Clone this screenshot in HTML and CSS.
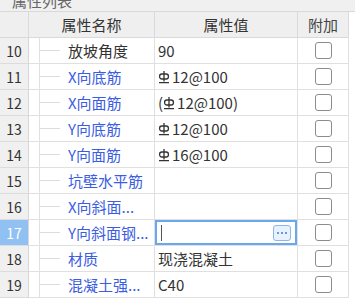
FILE: index.html
```html
<!DOCTYPE html>
<html lang="zh-CN">
<head>
    <meta charset="UTF-8">
    <title>属性列表</title>
    <link rel="stylesheet" href="styles.css">
</head>
<body>
    <div class="panel">
        <div class="caption"><span>属性列表</span></div>

        <div class="row head">
            <div class="cell num"></div>
            <div class="cell hname">属性名称</div>
            <div class="cell val center">属性值</div>
            <div class="cell add">附加</div>
        </div>

        <div class="row">
            <div class="cell num">10</div><div class="cell tree"></div>
            <div class="cell name plain"><i class="twig"></i>放坡角度</div>
            <div class="cell val">90</div>
            <div class="cell add"><span class="box"></span></div>
        </div>
        <div class="row">
            <div class="cell num">11</div><div class="cell tree"></div>
            <div class="cell name"><i class="twig"></i>X向底筋</div>
            <div class="cell val"><svg class="bar" viewBox="0 0 12 14"><path d="M6 1v10.5M1 12.6h10"/><rect x="1.6" y="4" width="8.8" height="5" rx="2.2"/></svg>12@100</div>
            <div class="cell add"><span class="box"></span></div>
        </div>
        <div class="row">
            <div class="cell num">12</div><div class="cell tree"></div>
            <div class="cell name"><i class="twig"></i>X向面筋</div>
            <div class="cell val">(<svg class="bar" viewBox="0 0 12 14"><path d="M6 1v10.5M1 12.6h10"/><rect x="1.6" y="4" width="8.8" height="5" rx="2.2"/></svg>12@100)</div>
            <div class="cell add"><span class="box"></span></div>
        </div>
        <div class="row">
            <div class="cell num">13</div><div class="cell tree"></div>
            <div class="cell name"><i class="twig"></i>Y向底筋</div>
            <div class="cell val"><svg class="bar" viewBox="0 0 12 14"><path d="M6 1v10.5M1 12.6h10"/><rect x="1.6" y="4" width="8.8" height="5" rx="2.2"/></svg>12@100</div>
            <div class="cell add"><span class="box"></span></div>
        </div>
        <div class="row">
            <div class="cell num">14</div><div class="cell tree"></div>
            <div class="cell name"><i class="twig"></i>Y向面筋</div>
            <div class="cell val"><svg class="bar" viewBox="0 0 12 14"><path d="M6 1v10.5M1 12.6h10"/><rect x="1.6" y="4" width="8.8" height="5" rx="2.2"/></svg>16@100</div>
            <div class="cell add"><span class="box"></span></div>
        </div>
        <div class="row">
            <div class="cell num">15</div><div class="cell tree"></div>
            <div class="cell name"><i class="twig"></i>坑壁水平筋</div>
            <div class="cell val"></div>
            <div class="cell add"><span class="box"></span></div>
        </div>
        <div class="row">
            <div class="cell num">16</div><div class="cell tree"></div>
            <div class="cell name"><i class="twig"></i>X向斜面...</div>
            <div class="cell val"></div>
            <div class="cell add"><span class="box"></span></div>
        </div>
        <div class="row">
            <div class="cell num current">17</div><div class="cell tree"></div>
            <div class="cell name"><i class="twig"></i>Y向斜面钢...</div>
            <div class="cell val editing">
                <span class="caret"></span>
                <span class="more"><b></b><b></b><b></b></span>
            </div>
            <div class="cell add"><span class="box"></span></div>
        </div>
        <div class="row">
            <div class="cell num">18</div><div class="cell tree"></div>
            <div class="cell name"><i class="twig"></i>材质</div>
            <div class="cell val">现浇混凝土</div>
            <div class="cell add"><span class="box"></span></div>
        </div>
        <div class="row">
            <div class="cell num">19</div><div class="cell tree"></div>
            <div class="cell name"><i class="twig"></i>混凝土强...</div>
            <div class="cell val">C40</div>
            <div class="cell add"><span class="box"></span></div>
        </div>
    </div>
</body>
</html>
```

FILE: styles.css
```css
body { margin: 0; background: #fff; font-family: "Noto Sans CJK SC", "Noto Sans", sans-serif; font-size: 15px; color: #333; }
.panel { width: 355px; height: 300px; overflow: hidden; }

.caption { height: 12px; box-sizing: border-box; overflow: hidden; background: #f0f0f0; border-bottom: 1px solid #d9d9d9; padding-left: 12px; color: #666; }
.caption span { display: block; line-height: 20px; margin-top: -9px; }

.row { display: flex; height: 26px; }
.cell { box-sizing: border-box; height: 26px; border-right: 1px solid #e0e0e0; border-bottom: 1px solid #e0e0e0; display: flex; align-items: center; white-space: nowrap; overflow: hidden; }

.num { width: 29px; justify-content: center; background: #f0f0f0; border-right-color: #d6d6d6; border-bottom-color: #dcdcdc; font-size: 14px; }
.num.current { background: #90c1f2; color: #fff; }
.tree { width: 11px; }
.name { width: 115px; color: #3a5de2; }
.name.plain { color: #333; }
.twig { width: 20px; height: 1px; background: #dcdcdc; margin-right: 8px; flex: none; }
.val { width: 143px; padding-left: 3px; }
.add { width: 51px; justify-content: center; }

.head .cell { background: #efefef; border-color: #dadada; color: #333; }
.head .hname { width: 126px; justify-content: center; }
.head .center { justify-content: center; padding-left: 0; }
.head .add { color: #444; }

.bar { width: 12px; height: 14px; margin: 0 2px 0 0; fill: none; stroke: #333; stroke-width: 1.3; }

.box { width: 17px; height: 17px; box-sizing: border-box; border: 1px solid #8c8c8c; border-radius: 3px; background: #fff; }

.editing { box-shadow: inset 0 0 0 2px #69a8ee; padding-left: 6px; padding-right: 6px; justify-content: space-between; }
.caret { width: 1px; height: 16px; background: #555; }
.more { width: 18px; height: 16px; box-sizing: border-box; border: 1px solid #8db6ec; border-radius: 3px; background: #e9f1fc; display: flex; align-items: center; justify-content: center; gap: 2px; }
.more b { width: 2px; height: 2px; background: #3a7bdc; border-radius: 1px; }
```
